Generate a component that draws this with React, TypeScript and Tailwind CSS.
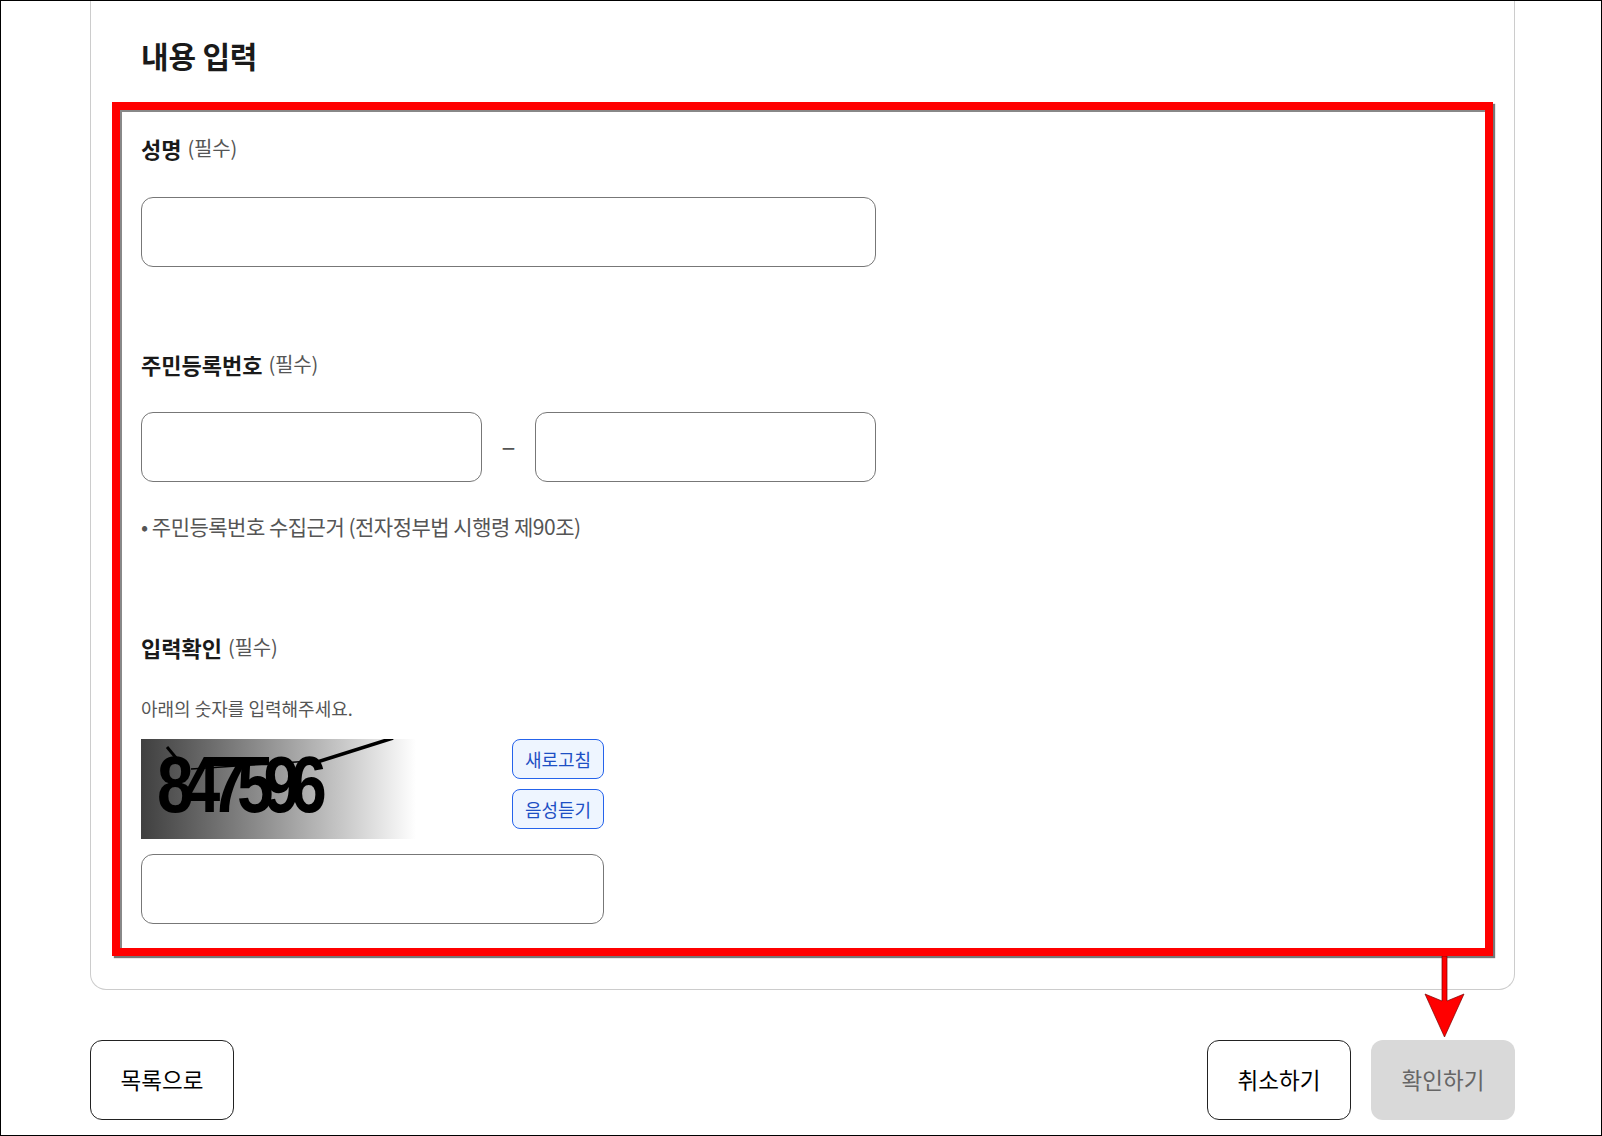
const font = { fontFamily: '"Noto Sans CJK KR", "Noto Sans", sans-serif' };

function Label({ children }: { children: string }) {
  return (
    <div className="flex h-[30px] items-center gap-[6px]">
      <span className="text-[22px] leading-[30px] font-bold text-[#1a1a1a]">{children}</span>
      <span className="text-[20px] leading-[30px] tracking-[-0.2px] text-[#555555]">(필수)</span>
    </div>
  );
}

function Field({ className }: { className: string }) {
  return <input type="text" aria-label="입력" className={`h-[70px] rounded-xl border border-[#777777] bg-white ${className}`} />;
}

function SmallButton({ children }: { children: string }) {
  return (
    <button className="flex h-[40px] w-[92px] items-center justify-center rounded-[8px] border border-[#2563eb] bg-[#eef5ff] text-[18px] text-[#1d4fc4]">
      {children}
    </button>
  );
}

function Captcha() {
  return (
    <div className="relative h-[100px] w-[275px] bg-gradient-to-r from-[#404040] to-white">
      <svg className="absolute inset-0" width="275" height="100" viewBox="0 0 275 100">
        <path d="M170 25 L252 -1" stroke="#000" strokeWidth="3.5" fill="none" />
        <path d="M26 8 L36 20" stroke="#000" strokeWidth="3" fill="none" />
        <path d="M50 30 L170 22" stroke="#000" strokeWidth="1.5" fill="none" />
      </svg>
      <span
        className="absolute top-0 left-[16px] origin-left scale-x-[0.82] text-[80px] leading-[92px] font-bold tracking-[-12px] text-black blur-[0.7px]"
        style={{ fontFamily: '"Liberation Sans", sans-serif' }}
      >
        847596
      </span>
    </div>
  );
}

export default function App() {
  return (
    <div className="relative flex h-[1136px] w-[1602px] flex-col overflow-hidden border border-black bg-white px-[89px]" style={font}>
      <section className="h-[989px] w-[1425px] rounded-b-2xl border-x border-b border-[#cccccc] px-[50px] pt-[34px]">
        <h2 className="text-[30px] leading-[40px] font-bold tracking-[-0.2px] text-[#1a1a1a]">내용 입력</h2>

        <div className="mt-[58px]">
          <Label>성명</Label>
          <Field className="mt-[34px] block w-[735px]" />
        </div>

        <div className="mt-[82px]">
          <Label>주민등록번호</Label>
          <div className="mt-[33px] flex w-[735px] items-center justify-between">
            <Field className="w-[341px]" />
            <span className="relative bottom-[2px] text-[26px] leading-[30px] text-[#555555]">–</span>
            <Field className="w-[341px]" />
          </div>
          <p className="mt-[30px] text-[21px] leading-[28px] tracking-[-0.5px] text-[#555555]">• 주민등록번호 수집근거 (전자정부법 시행령 제90조)</p>
        </div>

        <div className="mt-[92px] w-[463px]">
          <Label>입력확인</Label>
          <p className="mt-[34px] text-[18px] leading-[24px] text-[#555555]">아래의 숫자를 입력해주세요.</p>
          <div className="mt-[19px] flex justify-between">
            <Captcha />
            <div className="flex flex-col gap-[10px]">
              <SmallButton>새로고침</SmallButton>
              <SmallButton>음성듣기</SmallButton>
            </div>
          </div>
          <Field className="mt-[15px] block w-[463px]" />
        </div>
      </section>

      <div className="mt-[50px] flex w-[1425px] justify-between">
        <button className="h-[80px] w-[144px] rounded-xl border border-[#222222] bg-white text-[22.5px] text-black">목록으로</button>
        <div className="flex gap-[20px]">
          <button className="h-[80px] w-[144px] rounded-xl border border-[#222222] bg-white text-[22.5px] text-black">취소하기</button>
          <button className="h-[80px] w-[144px] rounded-xl bg-[#d9d9d9] text-[22.5px] text-[#666666]">확인하기</button>
        </div>
      </div>

      {/* 빨간 주석 상자와 화살표 */}
      <div className="pointer-events-none absolute top-[101px] left-[111px] h-[854px] w-[1381px] border-[8px] border-[#ff0000] shadow-[2px_2px_1px_#777777,inset_2px_2px_0_#888888]" />
      <svg className="pointer-events-none absolute top-[955px] left-[1420px]" width="48" height="84" viewBox="0 0 48 84">
        <path d="M21 0 H26 V45 L43 38 L23.5 81 L4 38 L21 45 Z" fill="#ff0000" stroke="#7a0000" strokeWidth="0.7" />
      </svg>
    </div>
  );
}
